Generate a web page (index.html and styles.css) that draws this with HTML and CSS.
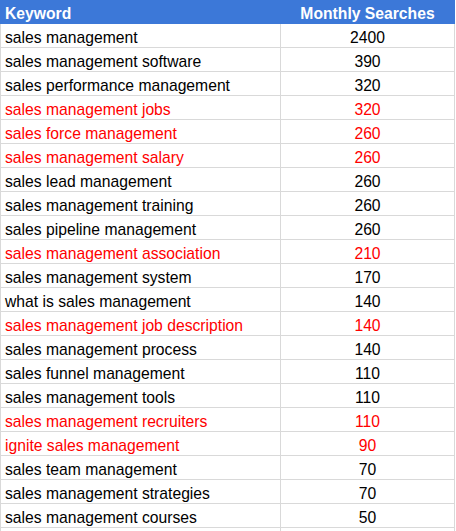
FILE: index.html
```html
<!DOCTYPE html>
<html>
<head>
<meta charset="utf-8">
<link rel="stylesheet" href="styles.css">
</head>
<body>
<table class="kw-table">
  <colgroup><col class="col-kw"><col class="col-num"></colgroup>
  <thead>
    <tr><th class="kw">Keyword</th><th class="num">Monthly Searches</th></tr>
  </thead>
  <tbody>
    <tr><td class="kw">sales management</td><td class="num">2400</td></tr>
    <tr><td class="kw">sales management software</td><td class="num">390</td></tr>
    <tr><td class="kw">sales performance management</td><td class="num">320</td></tr>
    <tr class="hl"><td class="kw">sales management jobs</td><td class="num">320</td></tr>
    <tr class="hl"><td class="kw">sales force management</td><td class="num">260</td></tr>
    <tr class="hl"><td class="kw">sales management salary</td><td class="num">260</td></tr>
    <tr><td class="kw">sales lead management</td><td class="num">260</td></tr>
    <tr><td class="kw">sales management training</td><td class="num">260</td></tr>
    <tr><td class="kw">sales pipeline management</td><td class="num">260</td></tr>
    <tr class="hl"><td class="kw">sales management association</td><td class="num">210</td></tr>
    <tr><td class="kw">sales management system</td><td class="num">170</td></tr>
    <tr><td class="kw">what is sales management</td><td class="num">140</td></tr>
    <tr class="hl"><td class="kw">sales management job description</td><td class="num">140</td></tr>
    <tr><td class="kw">sales management process</td><td class="num">140</td></tr>
    <tr><td class="kw">sales funnel management</td><td class="num">110</td></tr>
    <tr><td class="kw">sales management tools</td><td class="num">110</td></tr>
    <tr class="hl"><td class="kw">sales management recruiters</td><td class="num">110</td></tr>
    <tr class="hl"><td class="kw">ignite sales management</td><td class="num">90</td></tr>
    <tr><td class="kw">sales team management</td><td class="num">70</td></tr>
    <tr><td class="kw">sales management strategies</td><td class="num">70</td></tr>
    <tr><td class="kw">sales management courses</td><td class="num">50</td></tr>
    <tr><td class="kw"></td><td class="num"></td></tr>
  </tbody>
</table>
</body>
</html>
```

FILE: styles.css
```css
html, body {
  margin: 0;
  padding: 0;
  background: #ffffff;
}

.kw-table {
  border-collapse: collapse;
  table-layout: fixed;
  width: 454px;
  font-family: "Liberation Sans", Arial, sans-serif;
  font-size: 15.7px;
  color: #000000;
}

.col-kw { width: 280px; }
.col-num { width: 174px; }

.kw-table th,
.kw-table td {
  height: 23px;
  padding: 4px 4px 0 4px;
  line-height: 19px;
  white-space: nowrap;
  overflow: hidden;
  border: 1px solid #d9d9d9;
  box-sizing: border-box;
}

.kw-table th {
  background: #3c78d8;
  color: #ffffff;
  font-weight: bold;
  border-color: #3c78d8;
  border-top: 0;
}

.kw-table th.num {
  border-left-color: #2f65c0;
}

.kw-table .kw { text-align: left; }
.kw-table .num { text-align: center; }

.kw-table tr.hl td { color: #ff0000; }
```
